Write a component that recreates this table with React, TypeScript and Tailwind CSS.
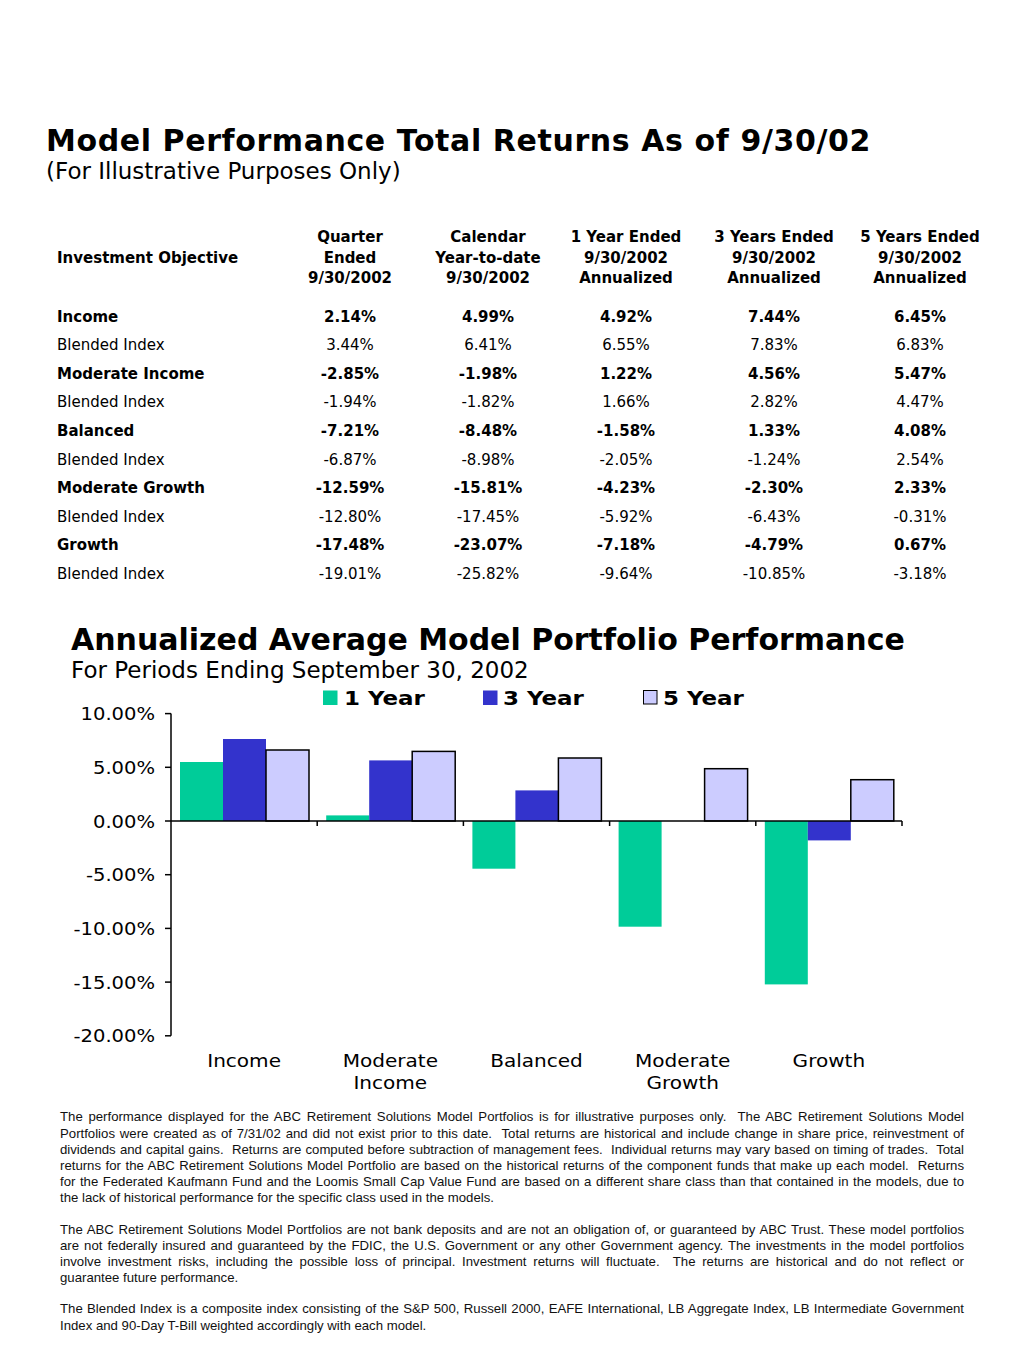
import React from 'react';

type Row = { label: string; bold?: boolean; v: string[] };

const rows: Row[] = [
  { label: 'Income', bold: true, v: ['2.14%', '4.99%', '4.92%', '7.44%', '6.45%'] },
  { label: 'Blended Index', v: ['3.44%', '6.41%', '6.55%', '7.83%', '6.83%'] },
  { label: 'Moderate Income', bold: true, v: ['-2.85%', '-1.98%', '1.22%', '4.56%', '5.47%'] },
  { label: 'Blended Index', v: ['-1.94%', '-1.82%', '1.66%', '2.82%', '4.47%'] },
  { label: 'Balanced', bold: true, v: ['-7.21%', '-8.48%', '-1.58%', '1.33%', '4.08%'] },
  { label: 'Blended Index', v: ['-6.87%', '-8.98%', '-2.05%', '-1.24%', '2.54%'] },
  { label: 'Moderate Growth', bold: true, v: ['-12.59%', '-15.81%', '-4.23%', '-2.30%', '2.33%'] },
  { label: 'Blended Index', v: ['-12.80%', '-17.45%', '-5.92%', '-6.43%', '-0.31%'] },
  { label: 'Growth', bold: true, v: ['-17.48%', '-23.07%', '-7.18%', '-4.79%', '0.67%'] },
  { label: 'Blended Index', v: ['-19.01%', '-25.82%', '-9.64%', '-10.85%', '-3.18%'] },
];

const headers: string[][] = [
  ['Quarter', 'Ended', '9/30/2002'],
  ['Calendar', 'Year-to-date', '9/30/2002'],
  ['1 Year Ended', '9/30/2002', 'Annualized'],
  ['3 Years Ended', '9/30/2002', 'Annualized'],
  ['5 Years Ended', '9/30/2002', 'Annualized'],
];

const GRID = 'grid grid-cols-[223px_140px_136px_140px_156px_136px]';

const Y0 = 684;

function Chart() {
  const zero = 823 - Y0;
  const ticks: [string, number][] = [
    ['10.00%', 715.6],
    ['5.00%', 769.3],
    ['0.00%', 823],
    ['-5.00%', 876.7],
    ['-10.00%', 930.4],
    ['-15.00%', 984.1],
    ['-20.00%', 1037.8],
  ];
  const bars = [
    [59, 82, 71],
    [5.6, 60.6, 69.6],
    [-47.7, 30.6, 63],
    [-105.7, 0, 52.3],
    [-163.4, -19.4, 41.3],
  ];
  const colors = ['#00CC99', '#3333CC', '#CCCCFF'];
  const cats = [['Income'], ['Moderate', 'Income'], ['Balanced'], ['Moderate', 'Growth'], ['Growth']];
  const catW = 146.2;
  const legend = [
    { sq: 323, tx: 344, c: colors[0], t: '1 Year', border: false },
    { sq: 483, tx: 503, c: colors[1], t: '3 Year', border: false },
    { sq: 643.5, tx: 663, c: colors[2], t: '5 Year', border: true },
  ];
  return (
    <svg width={1024} height={418} className="block" style={{ fontFamily: '"DejaVu Sans", Verdana, sans-serif' }}>
      {legend.map((l, i) => (
        <g key={i}>
          <rect
            x={l.sq}
            y={692.5 - Y0}
            width={l.border ? 13.5 : 14.5}
            height={l.border ? 13.5 : 14.5}
            fill={l.c}
            stroke={l.border ? '#000' : 'none'}
            strokeWidth={1}
          />
          <text
            transform={`translate(${l.tx} ${706.5 - Y0}) scale(1.21 1)`}
            fontSize={19}
            fontWeight="bold"
            fill="#000"
          >
            {l.t}
          </text>
        </g>
      ))}

      {bars.map((grp, i) =>
        grp.map((v, j) => {
          if (v === 0) return null;
          const x = 171 + i * catW + 9 + j * 43;
          const y = v > 0 ? zero - v : zero;
          const h = Math.abs(v);
          return (
            <rect
              key={`${i}-${j}`}
              x={x}
              y={y}
              width={43}
              height={h}
              fill={colors[j]}
              stroke={j === 2 ? '#000' : 'none'}
              strokeWidth={1.5}
            />
          );
        })
      )}

      {/* y axis */}
      <line x1={171} y1={715.6 - Y0} x2={171} y2={1037.8 - Y0} stroke="#000" strokeWidth={1.5} />
      {ticks.map(([t, y]) => (
        <g key={t}>
          <line x1={165} y1={y - Y0} x2={171} y2={y - Y0} stroke="#000" strokeWidth={1.5} />
          <text
            transform={`translate(155 ${y - Y0 + 6.5}) scale(1.15 1)`}
            fontSize={17}
            textAnchor="end"
            fill="#000"
          >
            {t}
          </text>
        </g>
      ))}

      {/* x axis */}
      <line x1={171} y1={zero} x2={902} y2={zero} stroke="#000" strokeWidth={1.5} />
      {[1, 2, 3, 4, 5].map((k) => (
        <line key={k} x1={171 + k * catW} y1={zero} x2={171 + k * catW} y2={zero + 5} stroke="#000" strokeWidth={1.5} />
      ))}

      {cats.map((lines, i) =>
        lines.map((t, li) => (
          <text
            key={`${i}-${li}`}
            transform={`translate(${171 + i * catW + catW / 2} ${1068.5 - Y0 + li * 22}) scale(1.18 1)`}
            fontSize={17}
            textAnchor="middle"
            fill="#000"
          >
            {t}
          </text>
        ))
      )}
    </svg>
  );
}

const p1 = [
  'The performance displayed for the ABC Retirement Solutions Model Portfolios is for illustrative purposes only.  The ABC Retirement Solutions Model',
  'Portfolios were created as of 7/31/02 and did not exist prior to this date.  Total returns are historical and include change in share price, reinvestment of',
  'dividends and capital gains.  Returns are computed before subtraction of management fees.  Individual returns may vary based on timing of trades.  Total',
  'returns for the ABC Retirement Solutions Model Portfolio are based on the historical returns of the component funds that make up each model.  Returns',
  'for the Federated Kaufmann Fund and the Loomis Small Cap Value Fund are based on a different share class than that contained in the models, due to',
  'the lack of historical performance for the specific class used in the models.',
];
const p2 = [
  'The ABC Retirement Solutions Model Portfolios are not bank deposits and are not an obligation of, or guaranteed by ABC Trust. These model portfolios',
  'are not federally insured and guaranteed by the FDIC, the U.S. Government or any other Government agency. The investments in the model portfolios',
  'involve investment risks, including the possible loss of principal. Investment returns will fluctuate.  The returns are historical and do not reflect or',
  'guarantee future performance.',
];
const p3 = [
  'The Blended Index is a composite index consisting of the S&P 500, Russell 2000, EAFE International, LB Aggregate Index, LB Intermediate Government',
  'Index and 90-Day T-Bill weighted accordingly with each model.',
];

function Para({ lines, className }: { lines: string[]; className?: string }) {
  return (
    <div className={className}>
      {lines.map((l, i) => (
        <div
          key={i}
          className={
            i < lines.length - 1
              ? 'text-justify [text-align-last:justify] whitespace-pre-wrap'
              : 'text-left whitespace-pre-wrap'
          }
        >
          {l}
        </div>
      ))}
    </div>
  );
}

export default function App() {
  return (
    <div className="w-[1024px] h-[1365px] bg-white text-black font-['DejaVu_Sans',Verdana,sans-serif] overflow-hidden">
      {/* Title */}
      <div className="pl-[46px] pt-[124px]">
        <h1 className="text-[30px] leading-[34px] font-bold tracking-[0.6px]">Model Performance Total Returns As of 9/30/02</h1>
        <div className="text-[23px] leading-[26px]">(For Illustrative Purposes Only)</div>
      </div>

      {/* Table */}
      <div className="ml-[57px] mt-[43px]">
        <div className={`${GRID} items-center text-[15px] leading-[20.5px] font-bold`}>
          <div>Investment Objective</div>
          {headers.map((h, i) => (
            <div key={i} className="flex flex-col items-center text-center">
              {h.map((t) => (
                <div key={t}>{t}</div>
              ))}
            </div>
          ))}
        </div>
        <div className="mt-[14px]">
          {rows.map((r, i) => (
            <div
              key={i}
              className={`${GRID} items-center text-[15px] h-[28.6px] ${r.bold ? 'font-bold' : ''}`}
            >
              <div>{r.label}</div>
              {r.v.map((v, j) => (
                <div key={j} className="text-center">
                  {v}
                </div>
              ))}
            </div>
          ))}
        </div>
      </div>

      {/* Chart heading */}
      <div className="pl-[71px] mt-[36px]">
        <h2 className="text-[30px] leading-[32px] font-bold">Annualized Average Model Portfolio Performance</h2>
        <div className="text-[23px] leading-[24px] mt-[2px]">For Periods Ending September 30, 2002</div>
      </div>

      <Chart />

      {/* Footnotes */}
      <div className="mx-[60px] mt-[9px] font-['Liberation_Sans',Arial,sans-serif] text-[13.2px] leading-[16.2px] text-[#111]">
        <Para lines={p1} />
        <Para lines={p2} className="mt-[15px]" />
        <Para lines={p3} className="mt-[15px]" />
      </div>
    </div>
  );
}
